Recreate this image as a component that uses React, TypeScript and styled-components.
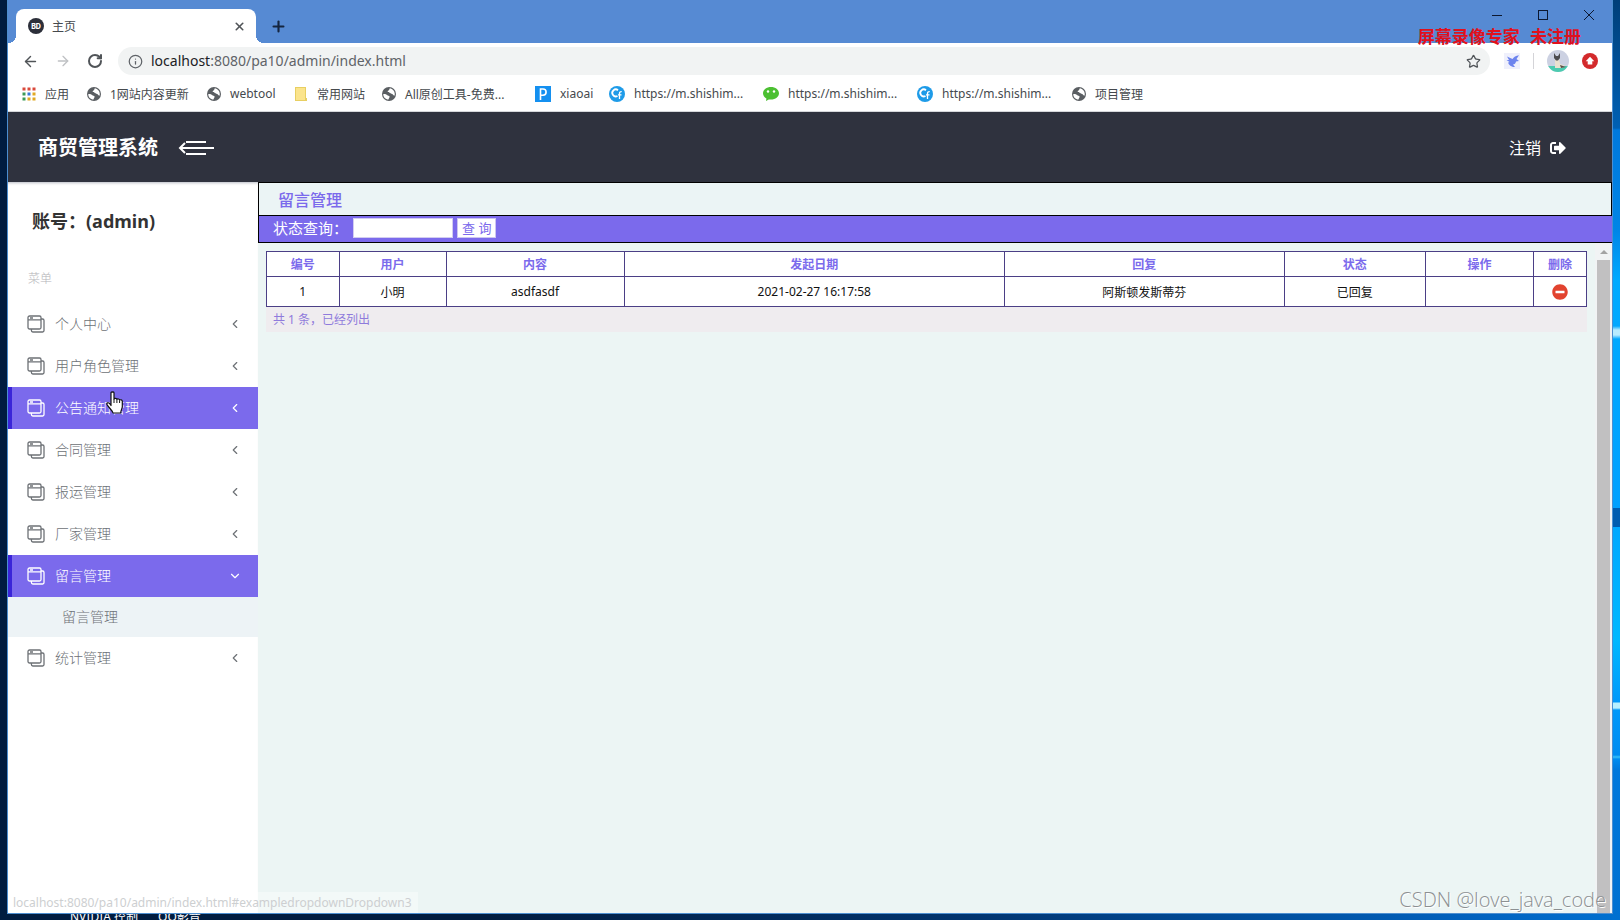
import React from "react";
import styled, { createGlobalStyle, css } from "styled-components";
import { FaSignOutAlt, FaMinusCircle } from "react-icons/fa";
import { ArrowLeft, ArrowRight, RotateCw, Star, X, Plus, Info, ChevronLeft, ChevronDown } from "lucide-react";

const purple = "#7b6aec";
const line = "#4b3f86";
const pale = "#ecf4f6";

const GlobalStyle = createGlobalStyle`
  *, *::before, *::after { box-sizing: border-box; }
  body {
    margin: 0;
    font-family: "Noto Sans", "Noto Sans CJK SC", sans-serif;
    font-size: 12px;
    color: #222;
  }
  button { font: inherit; color: inherit; border: 0; background: none; padding: 0; }
  a { color: inherit; text-decoration: none; }
  h1, h2, p, ul { margin: 0; padding: 0; }
  ul { list-style: none; }
`;

const Desktop = styled.div`
  min-height: 100vh;
  display: flex;
  flex-direction: column;
  padding: 0 8px;
  background:
    linear-gradient(#003f78 0, #0060b4 128px, #0078dc 130px, #0085e6 230px, #00aaff 280px, #00a8ff 326px,
      #b8ecff 330px, #b8ecff 335px, #00a8ff 339px, #00a0ff 508px, #005cb0 508px, #005cb0 527px,
      #00a8ff 527px, #00b8ff 640px, #0098fa 702px, #b8f0ff 703px, #b8f0ff 708px, #0098fa 710px,
      #008cf0 755px, #38c0f8 757px, #008cf0 759px, #0078dc 770px, #0070d0 100%) right top / 8px 100% no-repeat,
    linear-gradient(90deg, #001c40, #001c40 30%, #00346f 60%, #0060bc 90%, #0070d0);
`;

const Browser = styled.div`
  position: relative;
  flex: 1;
  display: flex;
  flex-direction: column;
  background: #fff;
  box-shadow: 0 0 0 1px #4c8ed0;
`;

const TabStrip = styled.div`
  display: flex;
  align-items: flex-end;
  height: 43px;
  padding-left: 8px;
  background: #568ad3;
`;

const Tab = styled.div`
  position: relative;
  display: flex;
  align-items: center;
  gap: 8px;
  width: 240px;
  height: 34px;
  padding: 0 10px 0 12px;
  border-radius: 8px 8px 0 0;
  background: #fff;
  color: #45494d;
  &::before, &::after {
    content: "";
    position: absolute;
    bottom: 0;
    width: 8px;
    height: 8px;
  }
  &::before { left: -8px; background: radial-gradient(circle at 0 0, transparent 8px, #fff 8px); }
  &::after { right: -8px; background: radial-gradient(circle at 100% 0, transparent 8px, #fff 8px); }
`;

const TabName = styled.span`
  flex: 1;
`;

const IconButton = styled.button<{ $tone?: string }>`
  display: flex;
  align-items: center;
  justify-content: center;
  color: ${(p) => p.$tone ?? "#505458"};
`;

const NewTab = styled(IconButton)`
  width: 44px;
  height: 34px;
  color: #14253f;
`;

const WindowButtons = styled.div`
  display: flex;
  align-self: flex-start;
  margin-left: auto;
`;

const WindowButton = styled.button`
  width: 46px;
  height: 30px;
  display: flex;
  align-items: center;
  justify-content: center;
`;

const Toolbar = styled.div`
  display: flex;
  align-items: center;
  height: 36px;
  padding: 0 14px;
`;

const NavButtons = styled.div`
  display: flex;
  gap: 16px;
  margin-right: 15px;
`;

const AddressBar = styled.div`
  flex: 1;
  display: flex;
  align-items: center;
  gap: 8px;
  height: 28px;
  padding: 0 9px 0 10px;
  border-radius: 14px;
  background: #f1f3f3;
  color: #5f6368;
`;

const Url = styled.div`
  flex: 1;
  font-size: 14px;
  line-height: 20px;
  b { font-weight: 400; color: #202124; }
`;

const Extensions = styled.div`
  display: flex;
  align-items: center;
  gap: 13px;
  margin-left: 14px;
`;

const Divider = styled.span`
  width: 1px;
  height: 16px;
  background: #d4d4d8;
`;

const Bookmarks = styled.nav`
  display: flex;
  height: 33px;
  padding: 0 14px 3px;
  border-bottom: 1px solid #d5d7da;
  color: #45494d;
`;

const Bookmark = styled.a<{ $width: number }>`
  display: flex;
  align-items: center;
  gap: 9px;
  width: ${(p) => p.$width}px;
  white-space: nowrap;
  svg { flex: none; }
`;

const Header = styled.header`
  display: flex;
  align-items: center;
  height: 70px;
  padding: 2px 46px 0 30px;
  background: #2f323e;
  color: #fff;
`;

const Brand = styled.h1`
  font-size: 20px;
  line-height: 30px;
  margin-right: 20px;
`;

const Logout = styled.a`
  display: flex;
  align-items: center;
  gap: 9px;
  margin-left: auto;
  font-size: 16px;
  line-height: 24px;
`;

const Body = styled.div`
  flex: 1;
  display: flex;
`;

const Sidebar = styled.aside`
  flex: none;
  width: 250px;
  background: #fff;
  box-shadow: inset 0 3px 3px -2px #b9bbc4;
`;

const Account = styled.h2`
  padding: 24px 24px 0;
  font-size: 18px;
  line-height: 30px;
  color: #333;
`;

const MenuTitle = styled.p`
  padding: 33px 20px 14px;
  font-size: 12px;
  line-height: 20px;
  font-weight: 300;
  color: #b4b4b8;
`;

const MenuItem = styled.a<{ $active?: boolean }>`
  position: relative;
  display: flex;
  align-items: center;
  gap: 10px;
  height: 42px;
  padding: 0 16px 0 15px;
  border-left: 4px solid transparent;
  font-size: 14px;
  line-height: 20px;
  font-weight: 300;
  color: #6d7176;
  ${(p) =>
    p.$active &&
    css`
      background: ${purple};
      border-color: #3a25d8;
      color: #fff;
    `}
`;

const MenuName = styled.span`
  flex: 1;
`;

const SubItem = styled.a`
  display: flex;
  align-items: center;
  height: 40px;
  padding-left: 54px;
  background: #edf3f6;
  font-size: 14px;
  line-height: 20px;
  font-weight: 300;
  color: #6d7176;
`;

const Pointer = styled.svg`
  position: absolute;
  left: 93px;
  top: 4px;
`;

const Main = styled.main`
  flex: 1;
  display: flex;
  flex-direction: column;
  background: ${pale};
  min-width: 0;
`;

const PageTitle = styled.h2`
  height: 34px;
  padding-left: 19px;
  border: 1px solid #000;
  background: #ebf4f5;
  font-size: 16px;
  font-weight: 500;
  line-height: 34px;
  color: ${purple};
`;

const SearchForm = styled.form`
  display: flex;
  align-items: center;
  height: 27px;
  padding: 0 14px 2px;
  border: solid #000;
  border-width: 0 0 1px 1px;
  background: ${purple};
  color: #fff;
  font-size: 15px;
  line-height: 24px;
`;

const SearchInput = styled.input`
  width: 100px;
  height: 20px;
  margin: 0 4px 0 5px;
  padding: 0 4px;
  border: 1px solid #d2cdf0;
  background: #fff;
`;

const SearchButton = styled.button`
  height: 20px;
  padding: 0 4px;
  border: 1px solid #ccc6f0;
  background: #fff;
  color: ${purple};
  font-size: 13px;
  line-height: 18px;
`;

const Scroller = styled.div`
  flex: 1;
  display: flex;
`;

const Content = styled.div`
  flex: 1;
  padding: 8px;
  background: #ecf5f4;
`;

const DataTable = styled.table`
  width: 100%;
  table-layout: fixed;
  border-collapse: collapse;
  background: #fff;
  text-align: center;
  th, td { border: 1px solid ${line}; padding: 0; }
  th { height: 25px; color: ${purple}; font-weight: 700; }
  td { height: 30px; color: #111; }
  svg { display: block; margin: 0 auto; }
`;

const Summary = styled.p`
  height: 25px;
  padding-left: 7px;
  background: #efecef;
  line-height: 25px;
  color: #8f7bdc;
`;

const ScrollTrack = styled.div`
  flex: none;
  display: flex;
  flex-direction: column;
  align-items: center;
  width: 17px;
  padding-top: 6px;
  background: #f1f3f4;
`;

const ScrollThumb = styled.div`
  flex: 1;
  width: 13px;
  margin-top: 5px;
  background: #c1c0c1;
`;

const StatusBubble = styled.div`
  position: absolute;
  left: 0;
  bottom: 0;
  height: 21px;
  padding: 0 6px 0 5px;
  background: rgba(255, 255, 255, 0.4);
  color: #cdcfd1;
  line-height: 21px;
`;

const RecorderMark = styled.div`
  position: absolute;
  right: 31px;
  top: 27px;
  color: #e0101c;
  font-family: "Liberation Mono", "Noto Sans CJK SC", monospace;
  font-size: 17px;
  font-weight: 700;
  line-height: 24px;
  white-space: pre;
`;

const Signature = styled.div`
  position: absolute;
  right: 6px;
  bottom: 0;
  color: #8c9092;
  font-family: "Open Sans", "Noto Sans", sans-serif;
  font-size: 20px;
  line-height: 27px;
  font-weight: 300;
  text-shadow: 1px 1px 0 #fff;
`;

const DesktopIcons = styled.div`
  display: flex;
  gap: 20px;
  height: 7px;
  padding-left: 62px;
  overflow: hidden;
  color: #fff;
  line-height: 8px;
`;

const Globe = () => (
  <svg width="14" height="14" viewBox="0 0 14 14" aria-hidden="true">
    <circle cx="7" cy="7" r="7" fill="#5a5e62" />
    <path d="M1.200 7.200c1.600-.4 2.800-.2 3.800.8 1 .9 2 .4 2.600 1.400.3.900-.8 1.200-1.100 3.200C3.500 12.400 1.300 10 1.200 7.200Z" fill="#fff" />
    <path d="M8 1.300C7 2 7.600 2.900 6.600 3.400c-.9.500-1.200.8-.7 1.500.7.800 1.800.3 2.400 1.200.5.900 1.800.7 2.600 1.400.6.600.9 1.400 1.500 1.200.3-.5.400-1.200.4-1.700C12.700 4 10.700 1.700 8 1.300Z" fill="#fff" />
  </svg>
);

const Apps = () => (
  <svg width="14" height="14" viewBox="0 0 14 14" aria-hidden="true">
    {["#d9493b", "#d9493b", "#d9493b", "#3d9a57", "#3a78d8", "#e0a823", "#3d9a57", "#e0a823", "#e0a823"].map((c, i) => (
      <rect key={i} x={(i % 3) * 5 + 0.5} y={Math.floor(i / 3) * 5 + 0.5} width="3" height="3" fill={c} />
    ))}
  </svg>
);

const Folder = () => (
  <svg width="14" height="14" viewBox="0 0 14 14" aria-hidden="true">
    <path d="M1 0h11v11h1v3H1Z" fill="#e8cf62" />
    <path d="M2 1h9v12H2Z" fill="#fbe48c" />
  </svg>
);

const Parking = () => (
  <svg width="16" height="16" viewBox="0 0 16 16" aria-hidden="true">
    <rect width="16" height="16" fill="#1490f0" />
    <path d="M5.500 14V3H8a3 3 0 0 1 0 6.200H5.500" fill="none" stroke="#fff" strokeWidth="1.600" />
  </svg>
);

const Cloud = () => (
  <svg width="16" height="16" viewBox="0 0 16 16" aria-hidden="true">
    <circle cx="8" cy="8" r="8" fill="#1e9be8" />
    <path d="M9 4.200A3.500 3.500 0 1 0 8.500 10" fill="none" stroke="#fff" strokeWidth="1.800" />
    <path d="M10.500 13V7.500c0-1.500.8-2 2.200-1.800M9 8.800h3.500" fill="none" stroke="#fff" strokeWidth="1.300" />
  </svg>
);

const Chat = () => (
  <svg width="16" height="14" viewBox="0 0 16 14" aria-hidden="true">
    <path d="M8 0c4.400 0 8 2.700 8 6.300s-3.600 6.300-8 6.300c-.8 0-1.500 0-2.200-.2L3 14l.4-2.500C1.300 10.400 0 8.500 0 6.300 0 2.700 3.600 0 8 0Z" fill="#4cc032" />
    <circle cx="5" cy="4.500" r="1.200" fill="#fff" />
    <circle cx="11" cy="4.500" r="1.200" fill="#fff" />
  </svg>
);

const Favicon = () => (
  <svg width="16" height="16" viewBox="0 0 16 16" aria-hidden="true">
    <circle cx="8" cy="8" r="8" fill="#2c2f3a" />
    <text x="8" y="10.500" textAnchor="middle" fontSize="7" fontWeight="800" fontFamily="Inter, sans-serif" fill="#fff">BD</text>
  </svg>
);

const Bird = () => (
  <svg width="16" height="16" viewBox="0 0 16 16" aria-hidden="true">
    <rect width="16" height="16" fill="#eff0fc" />
    <path d="M3 3.500 8.500 6C9.500 4 12 2.500 15 2.200L12.500 6l2.500 2-3 .5c-.3 2-1.500 3-3 3l2 2.500C7.500 14 4.500 12 4.200 9.500L5.500 9 2.500 7H5Z" fill="#6d84ee" />
  </svg>
);

const Avatar = () => (
  <svg width="22" height="22" viewBox="0 0 22 22" aria-hidden="true">
    <defs>
      <clipPath id="avatar"><circle cx="11" cy="11" r="11" /></clipPath>
    </defs>
    <g clipPath="url(#avatar)">
      <rect width="22" height="22" fill="#ccd1e2" />
      <rect y="16" width="22" height="6" fill="#4ccbb0" />
      <path d="M8 9h4l1 5 5 2-3 2H8Z" fill="#ebe1cf" />
      <path d="m7 3 2 3h2l2-3v5l-2 2.500H9L7 8Z" fill="#4c4c50" />
      <path d="m13 15 6 2-5 1Z" fill="#5c5048" />
    </g>
  </svg>
);

const UpdateBadge = () => (
  <svg width="16" height="16" viewBox="0 0 16 16" aria-hidden="true">
    <circle cx="8" cy="8" r="8" fill="#d32a2c" />
    <path d="m8 3.800 4.300 4.500h-2v3.200H5.700V8.300h-2Z" fill="#fff" />
  </svg>
);

const ToggleIcon = () => (
  <svg width="36" height="18" viewBox="0 0 36 18" fill="none" stroke="#fff" strokeWidth="2" aria-hidden="true">
    <path d="M8 3h20M2 9h34M8 15h20" />
    <path d="M7 4 2 9l5 5" />
  </svg>
);

const StackIcon = () => (
  <svg width="18" height="18" viewBox="0 0 18 18" fill="none" stroke="currentColor" strokeWidth="1.300" aria-hidden="true">
    <rect x="1" y="1" width="13" height="13" rx="1.500" />
    <path d="M1 4.800h13M3 3h3" />
    <path d="M14 4h1.600A1.400 1.400 0 0 1 17 5.400v10.200a1.400 1.400 0 0 1-1.400 1.400H5.800a1.400 1.400 0 0 1-1.400-1.400V14" />
  </svg>
);

const Hand = () => (
  <Pointer width="20" height="24" viewBox="0 0 20 24" aria-hidden="true">
    <path
      d="M6 1.700C6 .6 9 .6 9 1.700V8c.4-1 2.800-.8 2.900.5.500-.9 2.600-.6 2.700.6.700-.7 2.700-.3 2.700 1.200v5.200c0 2-1.300 3-1.600 6.500H8C7.500 19.500 3.500 16.500 2 13.500c-.7-1.600 1.300-2.400 2.500-1l1.500 2Z"
      fill="#fff" stroke="#111" strokeWidth="1.200" strokeLinejoin="round"
    />
    <path d="M9 8v4M11.900 9v3M14.600 9.500V12" stroke="#111" strokeWidth="1" />
  </Pointer>
);

const bookmarks = [
  { name: "应用", icon: Apps, width: 65 },
  { name: "1网站内容更新", icon: Globe, width: 120 },
  { name: "webtool", icon: Globe, width: 87 },
  { name: "常用网站", icon: Folder, width: 88 },
  { name: "All原创工具-免费...", icon: Globe, width: 153 },
  { name: "xiaoai", icon: Parking, width: 74 },
  { name: "https://m.shishim...", icon: Cloud, width: 154 },
  { name: "https://m.shishim...", icon: Chat, width: 154 },
  { name: "https://m.shishim...", icon: Cloud, width: 155 },
  { name: "项目管理", icon: Globe, width: 90 },
];

const menu = [
  { name: "个人中心" },
  { name: "用户角色管理" },
  { name: "公告通知管理", active: true, pointed: true },
  { name: "合同管理" },
  { name: "报运管理" },
  { name: "厂家管理" },
  { name: "留言管理", active: true, children: ["留言管理"] },
  { name: "统计管理" },
];

const columns = [
  { name: "编号", width: "5.5%" },
  { name: "用户", width: "8.1%" },
  { name: "内容", width: "13.5%" },
  { name: "发起日期", width: "28.8%" },
  { name: "回复", width: "21.2%" },
  { name: "状态", width: "10.7%" },
  { name: "操作", width: "8.2%" },
  { name: "删除", width: "4%" },
];

export default function App() {
  return (
    <Desktop>
      <GlobalStyle />
      <Browser>
        <TabStrip>
          <Tab>
            <Favicon />
            <TabName>主页</TabName>
            <IconButton aria-label="关闭标签页"><X size={13} strokeWidth={3} /></IconButton>
          </Tab>
          <NewTab aria-label="新标签页"><Plus size={17} strokeWidth={3} /></NewTab>
          <WindowButtons>
            <WindowButton aria-label="最小化">
              <svg width="10" height="10"><path d="M0 5.500h10" stroke="#0c1830" /></svg>
            </WindowButton>
            <WindowButton aria-label="最大化">
              <svg width="10" height="10"><rect x=".5" y=".5" width="9" height="9" fill="none" stroke="#0c1830" /></svg>
            </WindowButton>
            <WindowButton aria-label="关闭">
              <svg width="10" height="10"><path d="m0 0 10 10M10 0 0 10" stroke="#0c1830" /></svg>
            </WindowButton>
          </WindowButtons>
        </TabStrip>
        <Toolbar>
          <NavButtons>
            <IconButton aria-label="后退"><ArrowLeft size={17} strokeWidth={2} /></IconButton>
            <IconButton aria-label="前进" $tone="#bfc1c4"><ArrowRight size={16} /></IconButton>
            <IconButton aria-label="刷新"><RotateCw size={16} strokeWidth={3} /></IconButton>
          </NavButtons>
          <AddressBar>
            <Info size={15} />
            <Url><b>localhost</b>:8080/pa10/admin/index.html</Url>
            <IconButton aria-label="收藏"><Star size={15} /></IconButton>
          </AddressBar>
          <Extensions>
            <Bird />
            <Divider />
            <Avatar />
            <UpdateBadge />
          </Extensions>
        </Toolbar>
        <Bookmarks>
          {bookmarks.map(({ name, icon: Icon, width }, i) => (
            <Bookmark key={i} href="#" $width={width}>
              <Icon />
              {name}
            </Bookmark>
          ))}
        </Bookmarks>
        <Header>
          <Brand>商贸管理系统</Brand>
          <IconButton aria-label="收起菜单"><ToggleIcon /></IconButton>
          <Logout href="#">注销<FaSignOutAlt size={16} /></Logout>
        </Header>
        <Body>
          <Sidebar>
            <Account>账号：(admin)</Account>
            <MenuTitle>菜单</MenuTitle>
            <ul>
              {menu.map((item) => (
                <li key={item.name}>
                  <MenuItem href="#" $active={item.active}>
                    <StackIcon />
                    <MenuName>{item.name}</MenuName>
                    {item.children ? <ChevronDown size={14} /> : <ChevronLeft size={14} />}
                    {item.pointed && <Hand />}
                  </MenuItem>
                  {item.children?.map((child) => (
                    <SubItem key={child} href="#">{child}</SubItem>
                  ))}
                </li>
              ))}
            </ul>
          </Sidebar>
          <Main>
            <PageTitle>留言管理</PageTitle>
            <SearchForm onSubmit={(e) => e.preventDefault()}>
              <label htmlFor="status">状态查询：</label>
              <SearchInput id="status" />
              <SearchButton>查 询</SearchButton>
            </SearchForm>
            <Scroller>
              <Content>
                <DataTable>
                  <colgroup>
                    {columns.map((c) => <col key={c.name} width={c.width} />)}
                  </colgroup>
                  <thead>
                    <tr>{columns.map((c) => <th key={c.name}>{c.name}</th>)}</tr>
                  </thead>
                  <tbody>
                    <tr>
                      <td>1</td>
                      <td>小明</td>
                      <td>asdfasdf</td>
                      <td>2021-02-27 16:17:58</td>
                      <td>阿斯顿发斯蒂芬</td>
                      <td>已回复</td>
                      <td />
                      <td><FaMinusCircle size={16} color="#e2432f" aria-label="删除" /></td>
                    </tr>
                  </tbody>
                </DataTable>
                <Summary>共 1 条，已经列出</Summary>
              </Content>
              <ScrollTrack>
                <svg width="8" height="6" aria-hidden="true"><path d="m0 5 4-4 4 4Z" fill="#a3a3a3" /></svg>
                <ScrollThumb />
              </ScrollTrack>
            </Scroller>
          </Main>
        </Body>
        <StatusBubble>localhost:8080/pa10/admin/index.html#exampledropdownDropdown3</StatusBubble>
        <RecorderMark>屏幕录像专家 未注册</RecorderMark>
        <Signature>CSDN @love_java_code</Signature>
      </Browser>
      <DesktopIcons>
        <span>NVIDIA 控制</span>
        <span>QQ影音</span>
      </DesktopIcons>
    </Desktop>
  );
}
